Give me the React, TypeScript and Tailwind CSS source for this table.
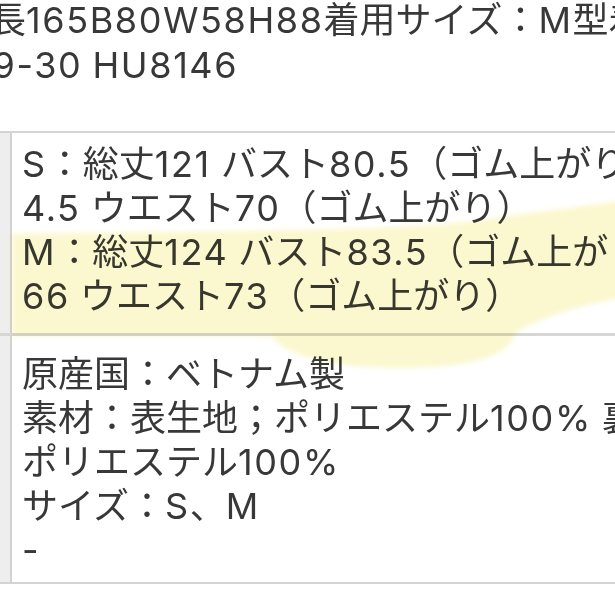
const rowOne = [
  "S：総丈121 バスト80.5（ゴム上がり）ヒップ9",
  "4.5 ウエスト70（ゴム上がり）",
  "M：総丈124 バスト83.5（ゴム上がり）ヒップ9",
  "66 ウエスト73（ゴム上がり）",
];

const rowTwo = [
  "原産国：ベトナム製",
  "素材：表生地；ポリエステル100% 裏地；",
  "ポリエステル100%",
  "サイズ：S、M",
  "-",
];

// latin runs get a little extra tracking so they sit as wide as in the photo
function Line({ text, className = "" }: { text: string; className?: string }) {
  const parts = text.split(/([\x21-\x7e]+)/);
  return (
    <p className={className}>
      {parts.map((part, i) => (/[\x21-\x7e]/.test(part) ? <span key={i} className="tracking-[1.6px]">{part}</span> : part))}
    </p>
  );
}

function Highlight() {
  // marker stroke over the M size rows
  return (
    <svg className="pointer-events-none absolute left-0 top-0 mix-blend-multiply" width={615} height={615} viewBox="0 0 615 615">
      <defs>
        <filter id="soft" x="-10%" y="-10%" width="120%" height="120%">
          <feGaussianBlur stdDeviation="2.5" />
        </filter>
      </defs>
      <path
        d="M 12 234 C 200 230, 400 232, 480 220 C 540 212, 590 205, 620 201 L 620 298 C 580 305, 540 318, 515 333 C 512 352, 480 368, 400 368 C 320 368, 282 352, 272 336 L 12 336 Z"
        fill="#fbf8cf"
        filter="url(#soft)"
      />
    </svg>
  );
}

export default function App() {
  return (
    <div className="relative h-[615px] w-[615px] overflow-hidden bg-white font-['Inter','Noto_Sans_CJK_JP',sans-serif] text-[36px] text-[#383838]">
      <div className="-mt-[2px] whitespace-nowrap leading-[45px]">
        <Line className="-ml-[46px]" text="身長165B80W58H88着用サイズ：M型着用" />
        <Line className="-ml-[31px]" text="29-30 HU8146" />
      </div>
      <div className="mt-[43px] border-y-2 border-[#d4d4d4]">
        <div className="flex border-b-[3px] border-[#d6d6d6]">
          <div className="w-[12px] shrink-0 border-r-2 border-[#d2d2d2] bg-[#eeeeee]" />
          <div className="min-w-0 flex-1 overflow-hidden whitespace-nowrap pb-[15px] pl-[10px] pt-[9px] leading-[44px]">
            {rowOne.map((line) => <Line key={line} text={line} />)}
          </div>
        </div>
        <div className="flex">
          <div className="w-[12px] shrink-0 border-r-2 border-[#d2d2d2] bg-[#eeeeee]" />
          <div className="min-w-0 flex-1 overflow-hidden whitespace-nowrap pb-[10px] pl-[10px] pt-[16px] leading-[44px]">
            {rowTwo.map((line) => <Line key={line} text={line} />)}
          </div>
        </div>
      </div>
      <Highlight />
    </div>
  );
}
